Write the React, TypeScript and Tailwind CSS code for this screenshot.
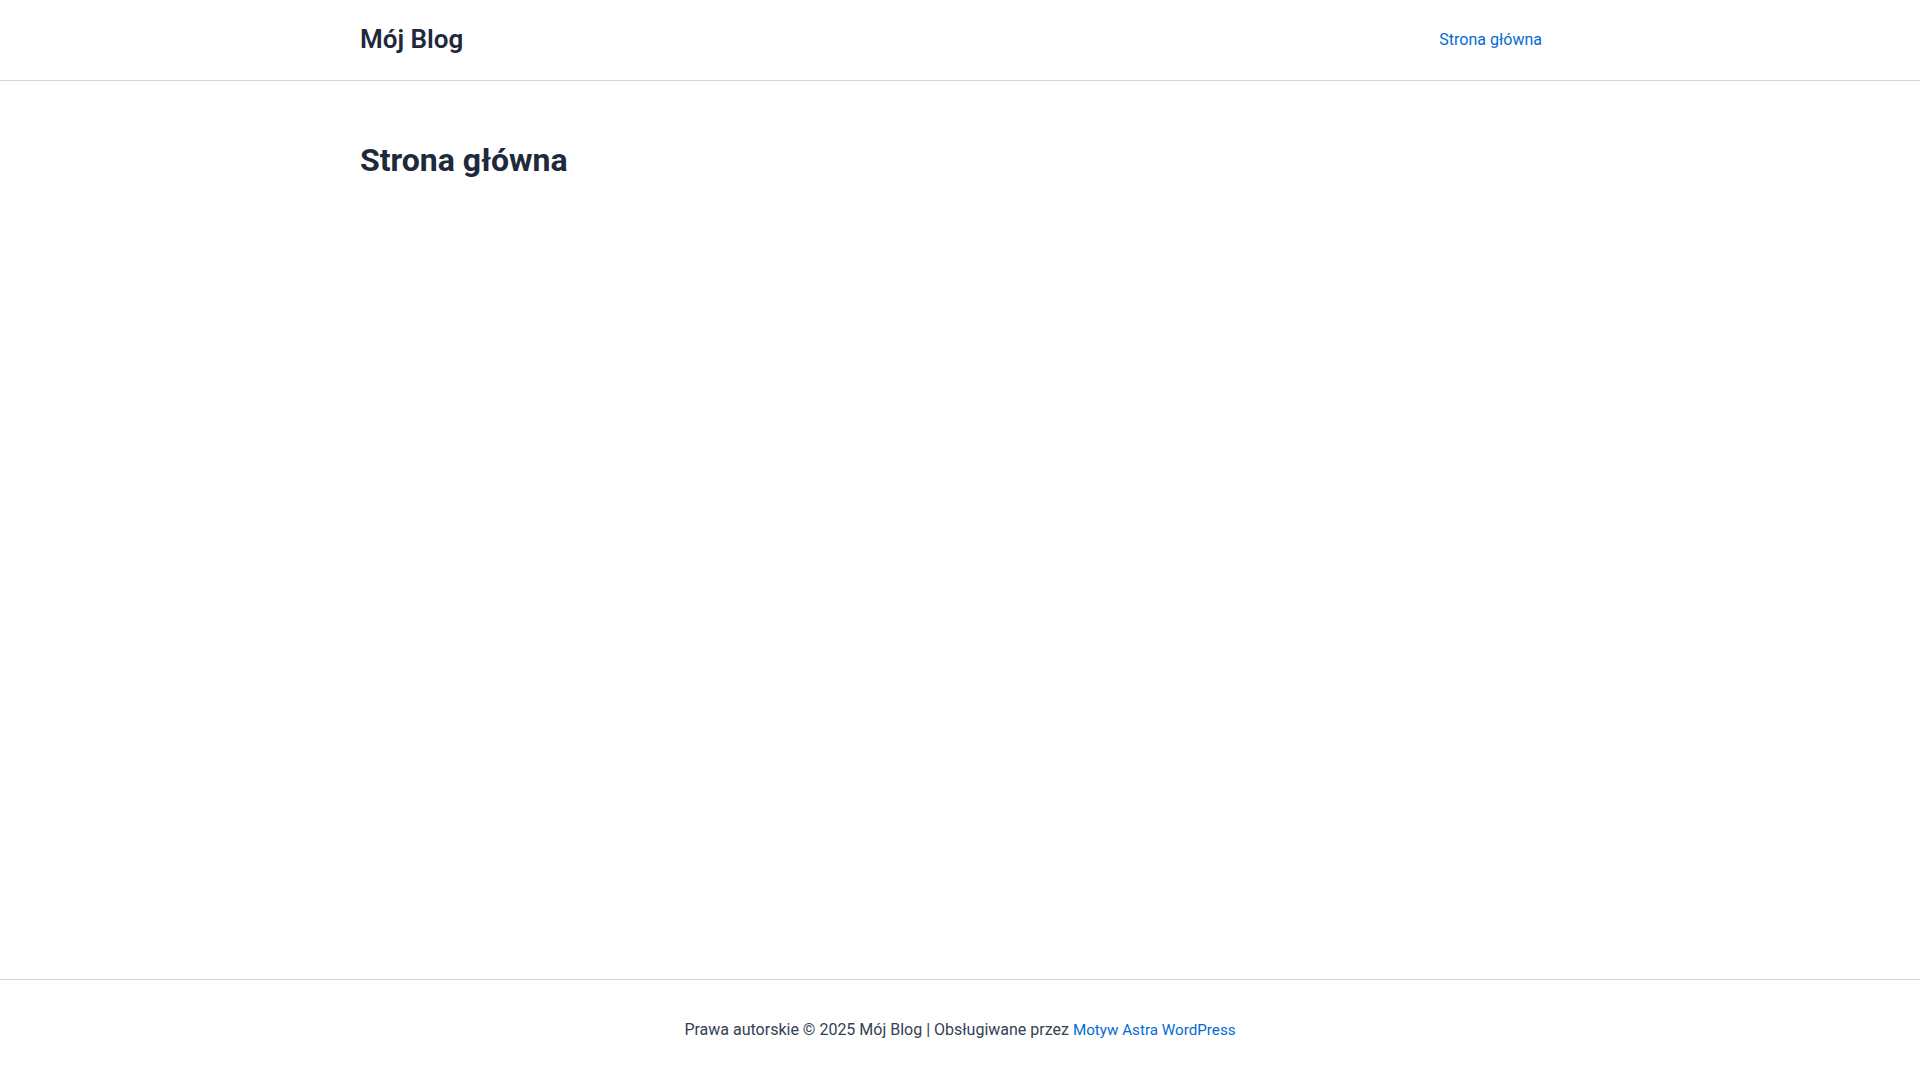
import React from "react";

export default function App() {
  return (
    <div
      className="min-h-screen flex flex-col bg-white text-[#334155]"
      style={{ fontFamily: "Roboto, 'Liberation Sans', sans-serif" }}
    >
      <header className="border-b border-[#d1d5db] bg-white">
        <div className="mx-auto w-full max-w-[1240px] px-5 h-20 flex items-center justify-between">
          <a href="#" className="text-[26px] font-semibold leading-none text-[#1e293b] -mt-[2px]">
            Mój Blog
          </a>
          <nav>
            <a href="#" className="block pl-4 pr-[18px] text-base text-[#046bd2]">
              Strona główna
            </a>
          </nav>
        </div>
      </header>
      <main className="flex-1">
        <div className="mx-auto w-full max-w-[1240px] px-5 pt-[60px]">
          <h1 className="text-[32px] font-bold leading-[1.2] text-[#1e293b]">
            Strona główna
          </h1>
        </div>
      </main>
      <footer className="border-t border-[#d1d5db] h-[101px] flex items-center justify-center">
        <p className="text-base text-[#334155]">
          Prawa autorskie © 2025 Mój Blog | Obsługiwane przez{" "}
          <a href="#" className="text-[15.2px] text-[#046bd2]">
            Motyw Astra WordPress
          </a>
        </p>
      </footer>
    </div>
  );
}
